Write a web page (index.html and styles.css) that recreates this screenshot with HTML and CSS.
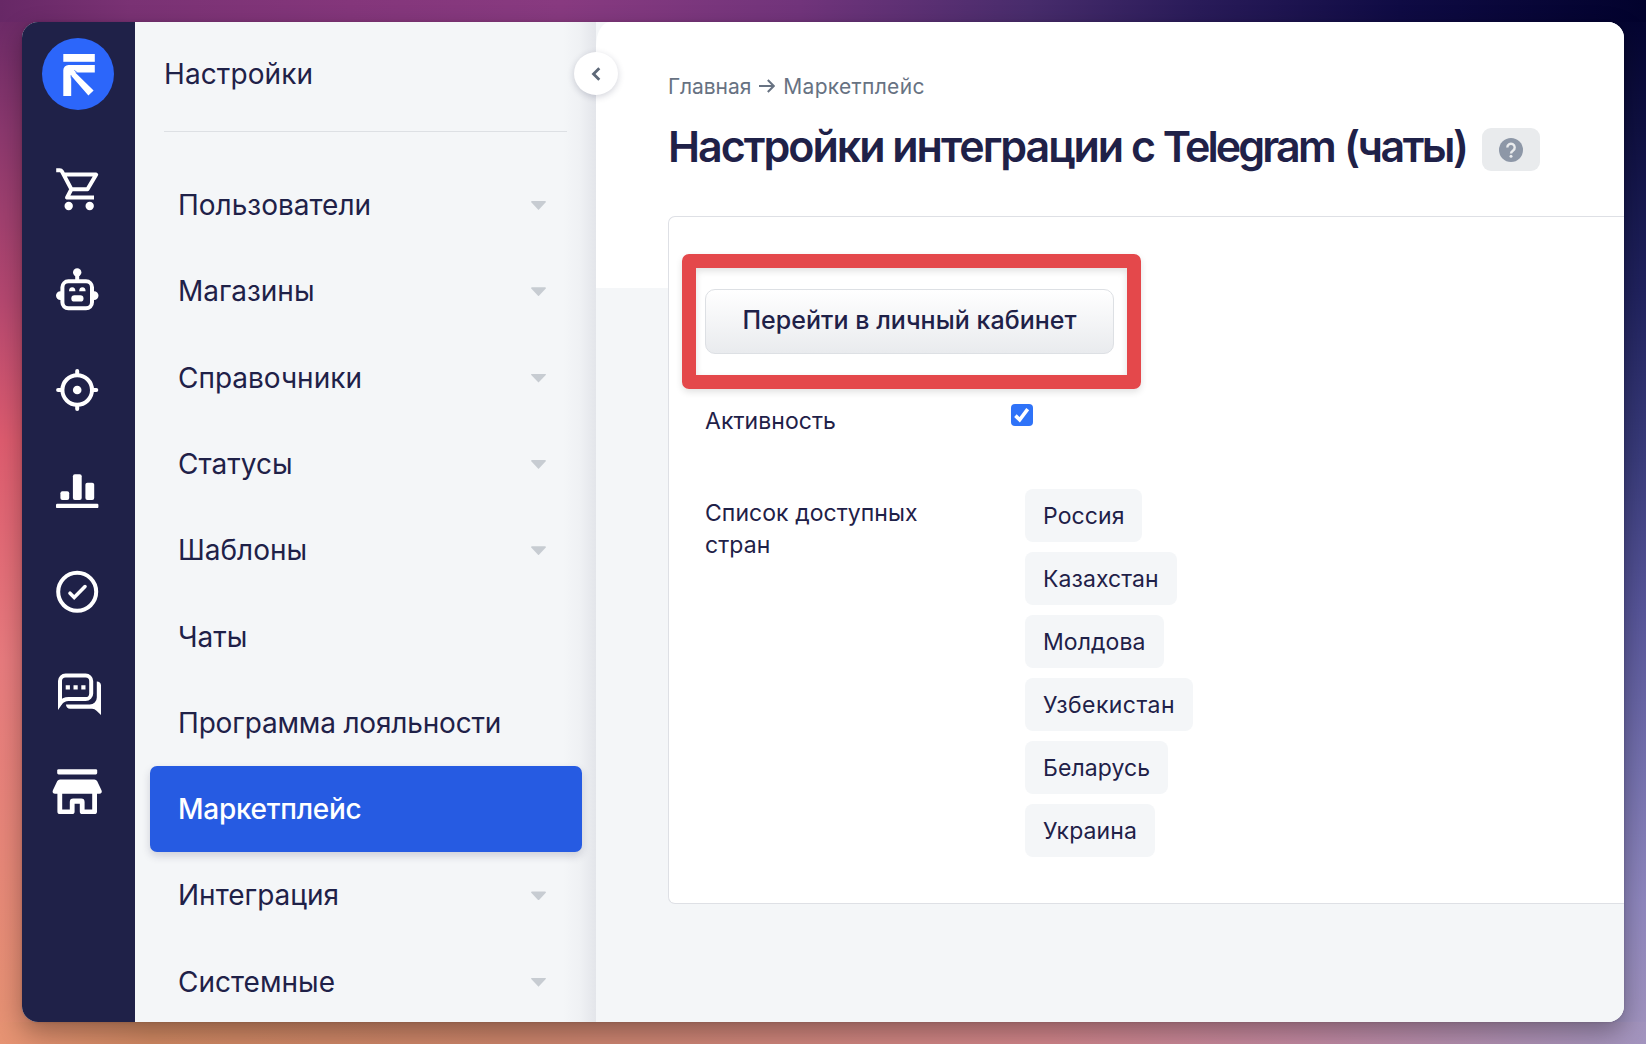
FILE: index.html
```html
<!DOCTYPE html>
<html lang="ru">
<head>
<meta charset="utf-8">
<title>Настройки интеграции с Telegram (чаты)</title>
<link rel="stylesheet" href="styles.css">
</head>
<body>
<div class="window">
  <nav class="rail">
    <svg class="logo" viewBox="42 38 72 72"><circle cx="78" cy="74" r="36" fill="#2c66fa"/><g fill="#fff"><path d="M63.3 54h31.5v7.8H63.3z"/><path d="M94.8 65v7.4H75.2l18.4 18-5.2 5L71.2 75.8V96h-7.9V70.2a5.2 5.2 0 0 1 5.2-5.2z"/></g><path d="M71 75.2l.2 3.2M74.4 70.4l3 2.4" stroke="#2c66fa" stroke-width=".8"/></svg>
    <div class="rail-icons">
      <svg viewBox="52 164 50 50"><path stroke-linejoin="round" d="M56.2 170.2h3.600q1.400 0 2.100 1.200L71.400 189.200h16.100L96.200 174.600H63.800M71.400 189.200l-4.400 8.400h27"/><g class="solid"><circle cx="68.7" cy="206" r="4.2"/><circle cx="89.7" cy="206" r="4.2"/></g></svg>
      <svg viewBox="52 265 50 50"><rect x="62.4" y="281.3" width="29.6" height="27" rx="6"/><path d="M77.2 273v8"/><g class="solid"><circle cx="77.2" cy="272.4" r="4.2"/><path d="M61 291.2h-.6a4.2 4.2 0 0 0 0 8.8H61zM93.500 291.2h.6a4.200 4.200 0 0 1 0 8.800h-.6zM69 291.2a3.200 4 0 0 1 6.400 0zM79.200 291.2a3.200 4 0 0 1 6.400 0z"/><rect x="71.3" y="295.2" width="12.2" height="6.4" rx="3.2"/></g></svg>
      <svg viewBox="52 365.3 50 50"><circle cx="77.2" cy="390.3" r="14.8"/><path stroke-linecap="round" d="M77.2 371.2v4M77.2 405.4v4M58.1 390.3h4M92.3 390.3h4"/><circle class="solid" cx="77.2" cy="390.3" r="4.3"/></svg>
      <svg viewBox="52 466 50 50"><g class="solid"><rect x="60.4" y="491.2" width="8.8" height="8.8" rx="2"/><rect x="72.9" y="474.3" width="8.8" height="25.7" rx="2"/><rect x="85.4" y="482.7" width="8.8" height="17.3" rx="2"/><rect x="56" y="503.8" width="42.4" height="4.3" rx="1.2"/></g></svg>
      <svg viewBox="52 566.4 50 50"><circle cx="77.2" cy="592.2" r="19"/><path d="M70 593.600l4.200 4.200 10.800-10.800" stroke-width="3.600" stroke-linecap="round"/></svg>
      <svg viewBox="52 667 50 50"><path d="M60 703.6V681a5.6 5.6 0 0 1 5.6-5.6h20a5.6 5.6 0 0 1 5.6 5.6v12.4a5.6 5.6 0 0 1-5.6 5.6h-17q-5.400 0-8.6 4.600z"/><g class="solid"><path d="M65.700 685.2h4.200v4.200h-4.200zM73.500 685.2h4.200v4.200h-4.200zM81.300 685.2h4.200v4.200h-4.200zM96.800 681.5a4 4 0 0 1 4.200 4V715l-4.500-4.300a6 6 0 0 0-4.500-2H70a4 4 0 0 1-4-4.200h23.800a7 7 0 0 0 7-7zM58 700v7.800l4-4z"/></g></svg>
      <svg viewBox="52 767.800 50 50"><g class="solid"><rect x="57.200" y="769" width="40" height="5.200" rx="1.400"/><path d="M60 779.200h34.400a3.200 3.200 0 0 1 2.700 1.500l4.400 9.300c.9 2-.2 3.600-2.200 3.600H97v17.700a2.600 2.600 0 0 1-2.600 2.600H82.400a2.600 2.600 0 0 1-2.600-2.600V803.500h-5.200v7.800a2.600 2.600 0 0 1-2.600 2.600H60a2.600 2.600 0 0 1-2.600-2.600V793.600h-2.300c-2 0-3.100-1.600-2.200-3.600l4.400-9.300a3.200 3.200 0 0 1 2.700-1.500zM62.200 793.600v15.800h7.600v-7.600a3.400 3.400 0 0 1 3.400-3.400h8a3.400 3.400 0 0 1 3.400 3.400v7.600h7.600v-15.800z"/></g></svg>
    </div>
  </nav>
  <aside class="sidebar">
    <div class="sidebar-title">Настройки</div>
    <ul class="menu">
      <li>Пользователи<i class="caret"></i></li>
      <li>Магазины<i class="caret"></i></li>
      <li>Справочники<i class="caret"></i></li>
      <li>Статусы<i class="caret"></i></li>
      <li>Шаблоны<i class="caret"></i></li>
      <li>Чаты</li>
      <li class="long">Программа лояльности</li>
      <li class="active">Маркетплейс</li>
      <li>Интеграция<i class="caret"></i></li>
      <li>Системные<i class="caret"></i></li>
    </ul>
  </aside>
  <main class="main">
    <div class="crumbs"><span>Главная</span><svg class="arrow" viewBox="0 0 16 14"><path d="M0 7h14.500M8.800 1l6 6-6 6"/></svg><span class="here">Маркетплейс</span></div>
    <div class="heading">
      <h1>Настройки интеграции с <span class="brand">Telegram</span> <span class="kind">(чаты)</span></h1>
      <span class="help"><svg viewBox="0 0 24 24"><circle cx="12" cy="12" r="12" fill="#8d97a7"/><path d="M8.300 9.500a3.700 3.700 0 1 1 5.800 3c-1.200.8-2.100 1.300-2.100 3" fill="none" stroke="#e9ebed" stroke-width="2.400"/><circle cx="12" cy="18.300" r="1.500" fill="#e9ebed"/></svg></span>
    </div>
    <section class="card">
      <div class="action"><button class="btn">Перейти в личный кабинет</button><div class="highlight"></div></div>
      <div class="row activity"><div class="label">Активность</div><span class="check"><svg viewBox="0 0 22 22"><path d="M4.400 11.600l4.300 4.200 8-10.600"/></svg></span></div>
      <div class="row countries"><div class="label">Список доступных стран</div>
        <div class="chips"><span>Россия</span><span>Казахстан</span><span>Молдова</span><span class="wide">Узбекистан</span><span>Беларусь</span><span>Украина</span></div>
      </div>
    </section>
  </main>
  <button class="collapse" aria-label="Свернуть"><svg viewBox="0 0 10 14"><path d="M8.300 1.200L2.500 7l5.800 5.800"/></svg></button>
</div>
</body>
</html>
```
FILE: styles.css
```css
* { box-sizing: border-box; }
body {
  margin: 0;
  width: 1646px;
  height: 1044px;
  padding: 22px;
  overflow: hidden;
  font-family: Inter, "Liberation Sans", sans-serif;
  color: #1f2148;
  background:
    linear-gradient(90deg, #672866 0, #7a3274 130px, #84367b 350px, #883a80 560px, #71347b 800px, #482c6c 1030px, #291b59 1200px, #0f0b44 1400px, #02022d 1646px) 0 0 / 1646px 22px no-repeat,
    linear-gradient(90deg, #e69373 0, #d08862 150px, #cc846a 500px, #d0848a 1050px, #c288a0 1300px, #a294be 1646px) 0 1022px / 1646px 22px no-repeat,
    linear-gradient(180deg, #672866 0, #8b386e 130px, #b54870 300px, #de5c6f 440px, #e87b7e 660px, #e69373 1044px) 0 0 / 40px 1044px no-repeat,
    linear-gradient(180deg, #02022d 0, #0f1042 130px, #20225e 290px, #3a3c7c 460px, #575599 610px, #7571ae 770px, #8e86bd 900px, #a294be 1044px) 100% 0 / 40px 1044px no-repeat,
    #803a70;
}
.window {
  position: relative;
  display: flex;
  width: 1602px;
  height: 1000px;
  border-radius: 16px;
  background: #f4f6f8;
  box-shadow: 0 10px 26px rgba(0, 0, 0, .32), 0 0 3px rgba(0, 0, 0, .15);
}
.rail {
  width: 113px;
  flex: none;
  background: #1f2148;
  border-radius: 16px 0 0 16px;
  padding: 16px 0 0 20px;
}
.logo { display: block; width: 72px; height: 72px; }
.rail-icons {
  display: flex;
  flex-direction: column;
  gap: 50.600px;
  padding: 54px 0 0 10px;
}
.rail-icons svg {
  display: block;
  width: 50px;
  height: 50px;
  fill: none;
  stroke: #fff;
  stroke-width: 4;
  overflow: visible;
}
.rail-icons .solid { fill: #fff; stroke: none; }
.sidebar {
  width: 461px;
  flex: none;
  background: linear-gradient(90deg, rgba(31, 33, 72, 0) 428px, rgba(31, 33, 72, .025) 445px, rgba(31, 33, 72, .08) 461px);
}
.sidebar-title {
  height: 110px;
  margin: 0 29px;
  border-bottom: 1px solid #dde0e4;
  font-size: 28px;
  line-height: 104px;
  letter-spacing: .1px;
}
.menu {
  list-style: none;
  margin: 29.800px 14px 0 15px;
  padding: 0;
  font-size: 28px;
}
.menu li {
  display: flex;
  align-items: center;
  justify-content: space-between;
  height: 86.320px;
  padding: 0 36px 0 28px;
  border-radius: 7px;
}
.menu .long { letter-spacing: -.180px; }
.menu .active {
  background: #265be2;
  color: #fff;
  font-weight: 500;
  letter-spacing: -.280px;
  box-shadow: 0 4px 8px rgba(31, 33, 72, .18);
}
.caret {
  width: 15px;
  height: 9px;
  margin-top: 1px;
  background: #c7ccd2;
  clip-path: polygon(4% 0, 96% 0, 100% 12%, 50% 100%, 0 12%);
}
.main {
  flex: 1;
  min-width: 0;
  padding: 49px 0 0 72px;
  border-radius: 14px 16px 16px 0 / 24px 16px 16px 0;
  background: linear-gradient(#fff 266px, #f4f6f8 266px);
}
.crumbs {
  display: flex;
  align-items: center;
  height: 30px;
  font-size: 21px;
  letter-spacing: -.070px;
  color: #677282;
}
.crumbs .here { letter-spacing: .320px; }
.arrow {
  width: 16px;
  height: 14px;
  margin: 0 8px;
  fill: none;
  stroke: #677282;
  stroke-width: 2;
}
.heading {
  display: flex;
  align-items: center;
  height: 60px;
  margin-top: 15px;
}
h1 {
  width: 814px;
  margin: 0;
  font-size: 43px;
  font-weight: 600;
  line-height: 60px;
  letter-spacing: -2.020px;
  white-space: nowrap;
}
.brand { letter-spacing: -2.900px; margin-right: 1.500px; }
.kind { letter-spacing: -2.550px; }
.help {
  display: flex;
  align-items: center;
  justify-content: center;
  width: 58px;
  height: 43px;
  margin-top: 7px;
  border-radius: 9px;
  background: #e9ebed;
}
.help svg { width: 24px; height: 24px; }
.card {
  height: 688px;
  margin-top: 40px;
  border: 1px solid #dee0e5;
  border-right: 0;
  border-radius: 7px 0 0 7px;
  background: #fff;
  padding: 72px 0 0 36px;
}
.action { position: relative; width: 409px; }
.btn {
  display: block;
  width: 409px;
  height: 65px;
  padding: 0 0 3px;
  border: 1px solid #dde0e4;
  border-radius: 10px;
  background: linear-gradient(#fff, #e9ebee);
  font: 500 25px Inter, "Liberation Sans", sans-serif;
  letter-spacing: .040px;
  color: #1f2148;
}
.highlight {
  position: absolute;
  inset: -35px -27px -35px -23px;
  border: 14px solid #e4484b;
  border-radius: 7px;
  box-shadow: 0 3px 7px rgba(0, 0, 0, .12), inset 0 3px 7px rgba(0, 0, 0, .12);
}
.row { display: flex; font-size: 23px; }
.label { line-height: 32px; letter-spacing: .050px; }
.activity { margin-top: 50px; height: 85px; }
.activity .label { width: 306px; padding-top: 1px; }
.check {
  width: 22px;
  height: 22px;
  border-radius: 4px;
  background: #2f73f8;
}
.check svg { display: block; fill: none; stroke: #fff; stroke-width: 3.600; }
.countries .label { width: 320px; padding: 8px 90px 0 0; }
.chips {
  display: flex;
  flex-direction: column;
  align-items: flex-start;
  gap: 10px;
  letter-spacing: .080px;
}
.chips span {
  height: 53px;
  padding: 0 18px;
  border-radius: 8px;
  background: #f4f6f8;
  line-height: 54px;
}
.chips .wide { letter-spacing: .450px; }
.collapse {
  position: absolute;
  left: 552px;
  top: 30px;
  display: flex;
  align-items: center;
  justify-content: center;
  width: 44px;
  height: 43px;
  padding: 0;
  border: 0;
  border-radius: 50%;
  background: #fff;
  box-shadow: 0 2px 7px rgba(31, 33, 72, .2);
}
.collapse svg { width: 10px; height: 14px; fill: none; stroke: #5d6878; stroke-width: 2.800; }
```
